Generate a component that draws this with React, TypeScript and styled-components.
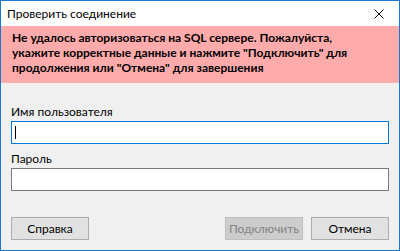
import styled, { createGlobalStyle } from "styled-components"

const GlobalStyle = createGlobalStyle`
  html, body {
    margin: 0;
    padding: 0;
    background: #ffffff;
  }
  body {
    font-family: Lato, "Liberation Sans", sans-serif;
    font-size: 12px;
  }
`

const Window = styled.div`
  width: 400px;
  height: 251px;
  box-sizing: border-box;
  border: 1px solid #1979ca;
  background: #f0f0f0;
  display: flex;
  flex-direction: column;
`

const TitleBar = styled.div`
  height: 25px;
  background: #ffffff;
  display: flex;
  align-items: center;
  justify-content: space-between;
  padding-left: 6px;
  color: #000;
  font-size: 12px;
`

const CloseButton = styled.div`
  width: 36px;
  height: 25px;
  display: flex;
  align-items: center;
  justify-content: center;
  margin-right: 2px;
`

const Banner = styled.div`
  background: #ffabab;
  height: 57px;
  box-sizing: border-box;
  padding: 4px 11px 0 11px;
  font-weight: 700;
  font-size: 12px;
  line-height: 15px;
  color: #000;
`

const Body = styled.div`
  flex: 1;
  display: flex;
  flex-direction: column;
  padding: 21px 10px 0 10px;
`

const Label = styled.div`
  font-size: 12px;
  line-height: 16px;
  color: #000;
  margin-bottom: 1px;
`

const Field = styled.div<{ $focused?: boolean }>`
  height: 23px;
  box-sizing: border-box;
  background: #fff;
  border: 1px solid ${(p) => (p.$focused ? "#0078d7" : "#7a7a7a")};
  margin-bottom: 7px;
  position: relative;
`

const Caret = styled.div`
  position: absolute;
  left: 3px;
  top: 4px;
  width: 1px;
  height: 13px;
  background: #000;
`

const Footer = styled.div`
  display: flex;
  align-items: center;
  margin-top: 19px;
`

const Button = styled.div<{ $disabled?: boolean }>`
  width: 78px;
  height: 23px;
  box-sizing: border-box;
  display: flex;
  align-items: center;
  justify-content: center;
  font-size: 12px;
  background: ${(p) => (p.$disabled ? "#cccccc" : "#e1e1e1")};
  border: 1px solid ${(p) => (p.$disabled ? "#bfbfbf" : "#adadad")};
  color: ${(p) => (p.$disabled ? "#838383" : "#000")};
`

const Spacer = styled.div`
  flex: 1;
`

const Gap = styled.div`
  width: 8px;
`

export default function App() {
  return (
    <>
      <GlobalStyle />
      <Window>
        <TitleBar>
          <span>Проверить соединение</span>
          <CloseButton>
            <svg width="10" height="10" viewBox="0 0 10 10">
              <path d="M0.5 0.5 L9.5 9.5 M9.5 0.5 L0.5 9.5" stroke="#000" strokeWidth="1" />
            </svg>
          </CloseButton>
        </TitleBar>
        <Banner>
          Не удалось авторизоваться на SQL сервере. Пожалуйста,
          <br />
          укажите корректные данные и нажмите "Подключить" для
          <br />
          продолжения или "Отмена" для завершения
        </Banner>
        <Body>
          <Label>Имя пользователя</Label>
          <Field $focused>
            <Caret />
          </Field>
          <Label>Пароль</Label>
          <Field />
          <Footer>
            <Button>Справка</Button>
            <Spacer />
            <Button $disabled>Подключить</Button>
            <Gap />
            <Button>Отмена</Button>
          </Footer>
        </Body>
      </Window>
    </>
  )
}
